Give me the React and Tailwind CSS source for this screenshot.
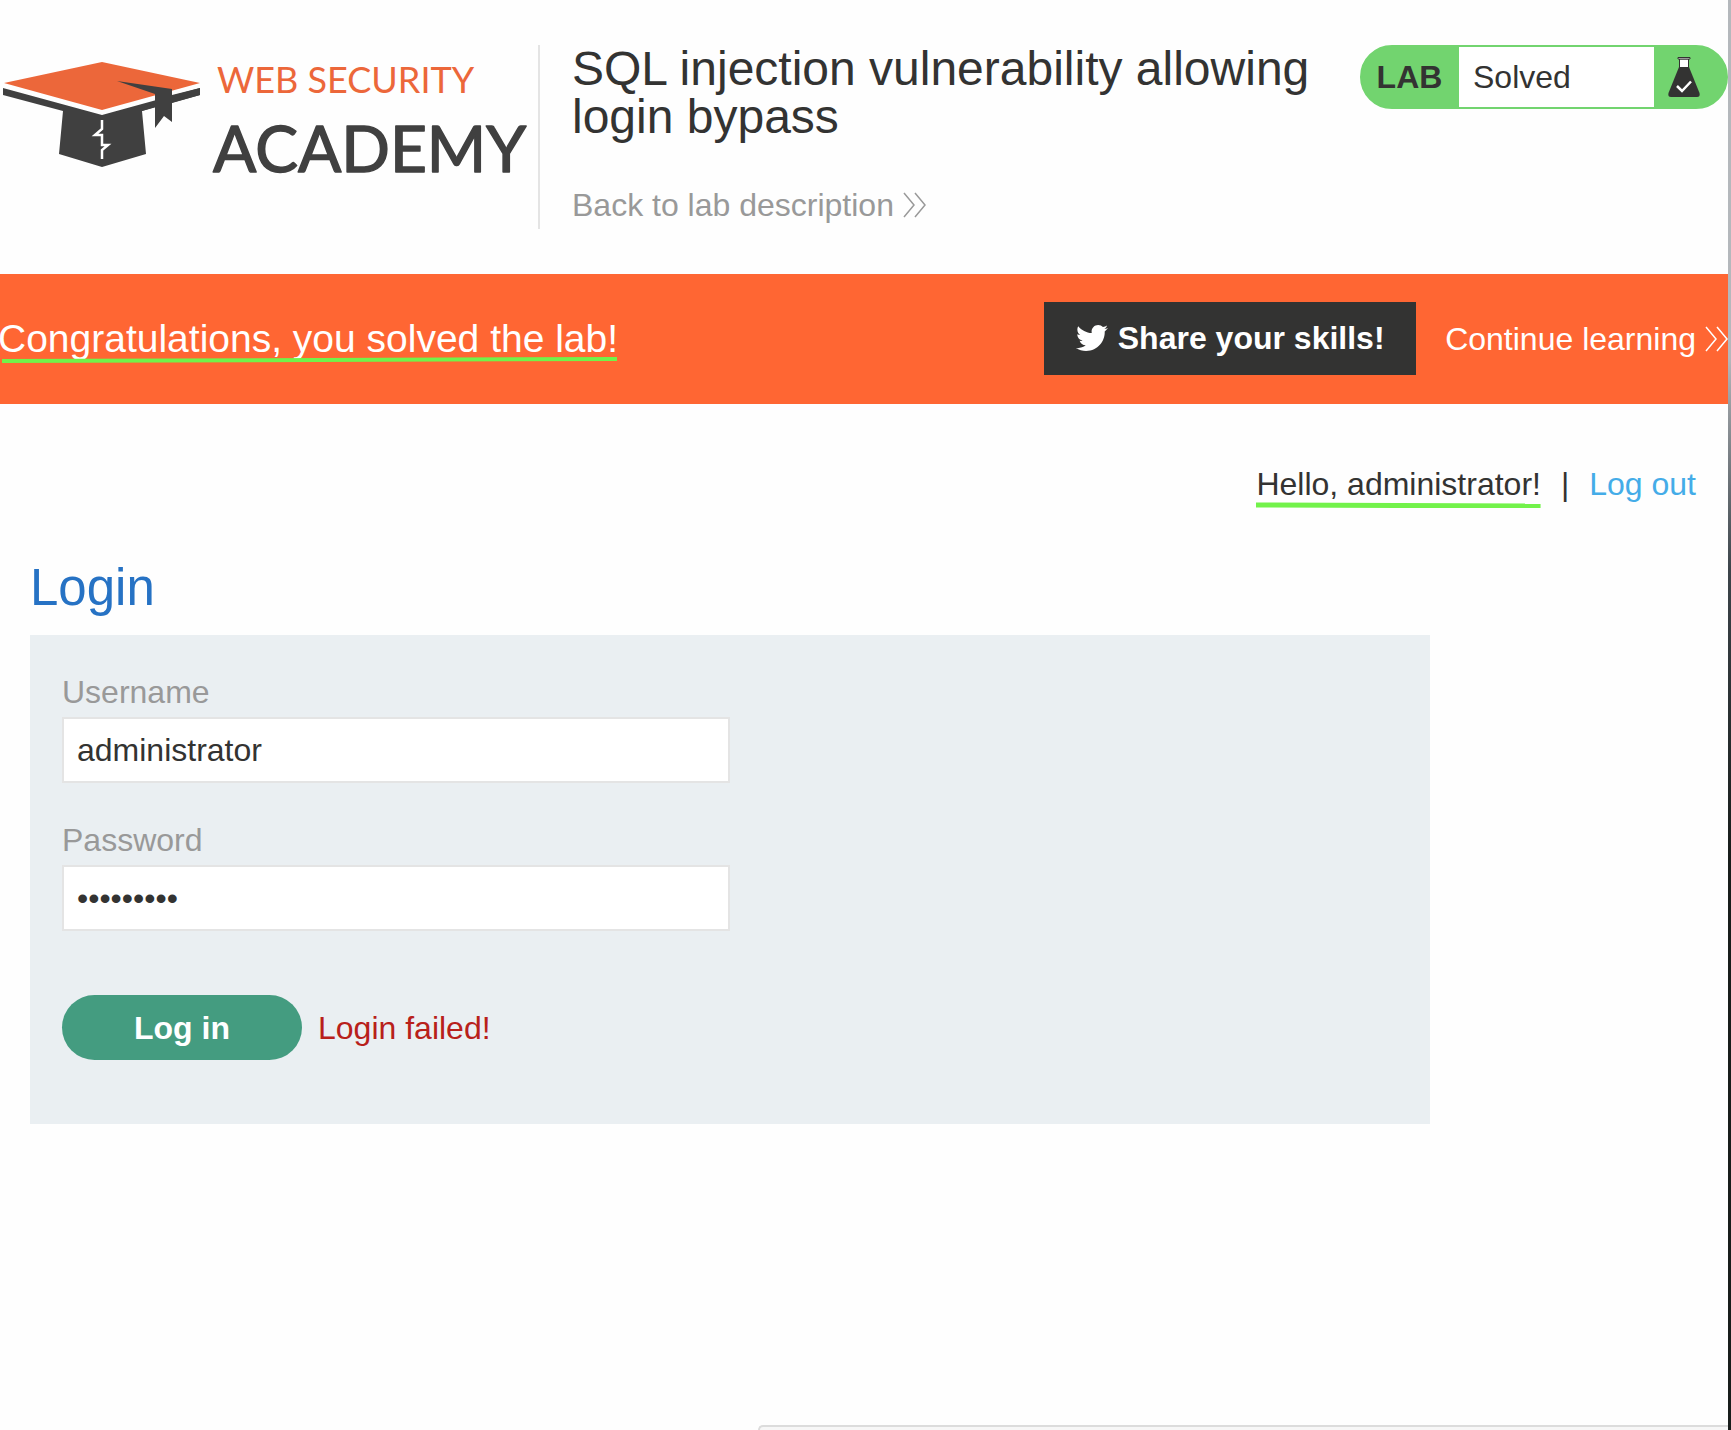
import React from "react";
import { FaTwitter } from "react-icons/fa";

function AcademyLogo() {
  return (
    <a href="#academy" aria-label="Web Security Academy" className="block shrink-0">
      <svg viewBox="0 0 536 150" className="block h-[150px] w-[536px]">
        <polygon points="4,38 102,17 200,38 102,65" fill="#ec673a" />
        <path d="M3 43L102 70L200 43V50L142 66L146 109L102 122L59 109L63 66L3 50Z" fill="#404040" />
        <path d="M155 47V59L172 54V46Z" fill="#fff" />
        <path d="M172 50L200 43V50L172 58ZM142 63L155 58V62L142 66Z" fill="#404040" />
        <path d="M117 36L172 44V77L164 71L155 83V49Z" fill="#404040" />
        <path d="M102 75V84L95 90H102V100H108L102 105V114" fill="none" stroke="#fff" strokeWidth="2.5" />
        <text x="217" y="48" fontFamily="Lato, sans-serif" fontSize="36" fill="#ec673a">WEB SECURITY</text>
        <text x="213" y="127" fontFamily="Lato, sans-serif" fontSize="64" fill="#404040" stroke="#404040" strokeWidth="1.5" strokeLinejoin="round">ACADEMY</text>
      </svg>
    </a>
  );
}

function Chevrons() {
  return (
    <svg viewBox="0 0 23 26" className="h-[26px] w-[23px] shrink-0" fill="none" stroke="currentColor" strokeWidth="1.5">
      <path d="M1 1L11 13L1 25M12 1L22 13L12 25" />
    </svg>
  );
}

function Flask() {
  return (
    <svg viewBox="0 0 34 42" className="h-[42px] w-[34px]">
      <path d="M12.500 3H21.500V13H12.500Z" fill="#fff" stroke="#333332" strokeWidth="1" />
      <path d="M11 1.500H23V3H11Z" fill="#fff" stroke="#333332" strokeWidth="1" />
      <path d="M12 11H22L32.500 37Q33.500 41 30 41H4Q0.500 41 1.500 37Z" fill="#333332" />
      <path d="M10 30L15 35L24 25.500" fill="none" stroke="#fff" strokeWidth="2.5" />
    </svg>
  );
}

function Field({ id, label, type, value }) {
  return (
    <div className="flex flex-col">
      <label htmlFor={id} className="leading-[50px] text-[#999]">{label}</label>
      <input
        id={id}
        type={type}
        defaultValue={value}
        className="h-[66px] w-full max-w-[668px] border-2 border-[#e4e4e4] bg-white px-[13px] text-[#333332] outline-none"
      />
    </div>
  );
}

export default function App() {
  return (
    <div className="flex min-h-screen bg-[#fefefe] font-['Liberation_Sans',Arial,sans-serif] text-[32px] leading-[36px] text-[#333332]">
      <div className="flex min-w-0 flex-1 flex-col">
        <header className="flex items-start pt-[45px]">
          <div className="flex h-[184px] w-[540px] shrink-0 border-r-2 border-[#e4e4e4]">
            <AcademyLogo />
          </div>
          <div className="min-w-0 flex-1 pl-8">
            <h1 className="text-[48px] leading-[48px]">SQL injection vulnerability allowing login bypass</h1>
            <a href="#lab" className="mt-[46px] flex items-center gap-[9px] text-[#999]">
              Back to lab description <Chevrons />
            </a>
          </div>
          <div className="flex h-16 w-[368px] shrink-0 items-stretch overflow-hidden rounded-full border-2 border-[#72d46f] bg-[#72d46f]">
            <span className="flex w-[97px] items-center justify-center pr-0.5 font-bold">LAB</span>
            <span className="flex flex-1 items-center bg-white pl-3.5">Solved</span>
            <span className="flex w-[72px] items-center pl-[13px]"><Flask /></span>
          </div>
        </header>

        <section className="mt-[45px] flex h-[130px] items-center bg-[#ff6633] text-white">
          <p className="relative -ml-0.5 flex-1 whitespace-nowrap text-[39px] leading-[44px]">
            Congratulations, you solved the lab!
            <svg viewBox="0 0 620 8" className="absolute top-[39px] left-0 h-2 w-[620px]">
              <path d="M4 5L619 3" stroke="#72f24a" strokeWidth="4" />
            </svg>
          </p>
          <button type="button" className="mb-0.5 flex h-[73px] w-[372px] items-center justify-center gap-2.5 bg-[#333332] font-bold">
            <FaTwitter className="size-8" /> Share your skills!
          </button>
          <a href="#learn" className="ml-[29px] flex items-center gap-[9px] whitespace-nowrap">
            Continue learning <Chevrons />
          </a>
        </section>

        <main className="px-[30px] pt-[62px]">
          <nav className="flex justify-end gap-5 pr-0.5">
            <span className="relative">
              Hello, administrator!
              <svg viewBox="0 0 284 6" preserveAspectRatio="none" className="absolute top-9 left-0 h-1.5 w-full">
                <path d="M0 3L284 4" stroke="#72f24a" strokeWidth="5" />
              </svg>
            </span>
            <span>|</span>
            <a href="#logout" className="text-[#44ace8]">Log out</a>
          </nav>
          <h2 className="mt-14 text-[51px] leading-[60px] text-[#2672c4]">Login</h2>
          <form className="mt-[17px] w-full max-w-[1400px] bg-[#eaeff2] px-8 pt-8 pb-16">
            <Field id="username" label="Username" type="text" value="administrator" />
            <div className="mt-8">
              <Field id="password" label="Password" type="password" value="peter1234" />
            </div>
            <div className="mt-16 flex items-center gap-4">
              <button type="button" className="h-[65px] w-60 rounded-full bg-[#449c80] font-bold text-white">Log in</button>
              <p className="text-[#b8201a]">Login failed!</p>
            </div>
          </form>
        </main>

        <div className="mt-auto flex justify-end">
          <div className="h-[5px] w-[970px] max-w-full rounded-tl-lg border-t-2 border-l-2 border-[#dcdcdc] bg-[#f7f7f7]" />
        </div>
      </div>
      <div className="w-[3px] shrink-0 bg-linear-to-b from-[#b4b8bc] from-25% via-[#3c444a] via-40% to-[#181d1b] to-60%" />
    </div>
  );
}
